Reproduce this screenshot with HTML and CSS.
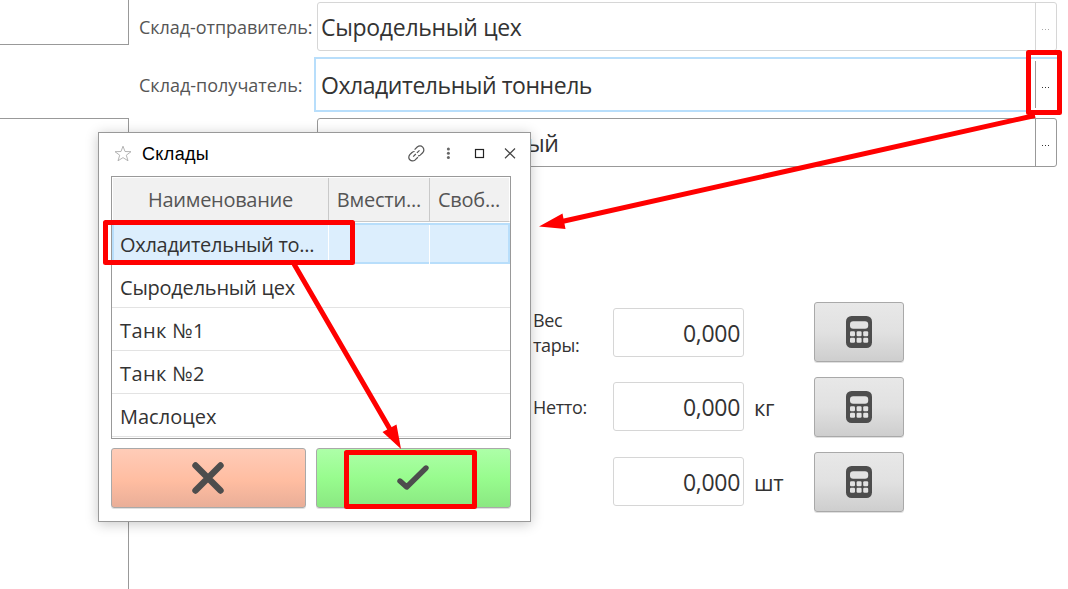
FILE: index.html
```html
<!DOCTYPE html>
<html lang="ru">
<head>
<meta charset="utf-8">
<title>Склады</title>
<link rel="stylesheet" href="styles.css">
</head>
<body>
<svg class="defs" width="0" height="0">
  <symbol id="calc" viewBox="0 0 26 32">
    <rect width="26" height="32" rx="5.5" fill="#4d4d4d"/>
    <g fill="#e2e2e2">
      <rect x="4" y="5.2" width="18.2" height="7.6" rx="3.2"/>
      <rect x="4" y="15.2" width="5" height="5" rx="1.2"/>
      <rect x="10.6" y="15.2" width="5" height="5" rx="1.2"/>
      <rect x="17.2" y="15.2" width="5" height="5" rx="1.2"/>
      <rect x="4" y="21.8" width="5" height="5" rx="1.2"/>
      <rect x="10.6" y="21.8" width="5" height="5" rx="1.2"/>
      <rect x="17.2" y="21.8" width="5" height="5" rx="1.2"/>
    </g>
  </symbol>
</svg>
<div class="page">
  <aside class="side">
    <div class="side-box side-top"></div>
    <div class="side-box side-bottom"></div>
  </aside>
  <main class="main">
    <section class="form">
      <div class="form-row">
        <label class="label label-sender">Склад-отправитель:</label>
        <div class="field field-muted"><span class="value value-sender">Сыродельный цех</span><span class="more"><i></i><i></i><i></i></span></div>
      </div>
      <div class="form-row form-row-active">
        <label class="label label-receiver">Склад-получатель:</label>
        <div class="field field-active"><span class="value value-receiver">Охладительный тоннель</span><span class="more"><i></i><i></i><i></i></span></div>
      </div>
      <div class="form-row">
        <label class="label"></label>
        <div class="field"><span class="value value-product">ый</span><span class="more"><i></i><i></i><i></i></span></div>
      </div>
    </section>
    <section class="weights">
      <div class="weight-row weight-row-tare">
        <span class="weight-label">Вес<br>тары:</span><span class="number">0,000</span><span class="unit"></span>
        <button class="calc-btn"><svg width="26" height="32"><use href="#calc"/></svg></button>
      </div>
      <div class="weight-row">
        <span class="weight-label">Нетто:</span><span class="number">0,000</span><span class="unit">кг</span>
        <button class="calc-btn"><svg width="26" height="32"><use href="#calc"/></svg></button>
      </div>
      <div class="weight-row">
        <span class="weight-label"></span><span class="number">0,000</span><span class="unit">шт</span>
        <button class="calc-btn"><svg width="26" height="32"><use href="#calc"/></svg></button>
      </div>
    </section>
  </main>
</div>

<div class="dialog">
  <header class="titlebar">
    <svg class="star" width="18" height="17" viewBox="0 0 18 17"><path d="M9 1.2 11 6.5 17 6.7 12.3 10.2 14 15.8 9 12.6 4 15.8 5.7 10.2 1 6.7 7 6.5Z" fill="none" stroke="#b4b4b4"/></svg>
    <h1 class="title">Склады</h1>
    <svg class="win-icons" width="110" height="18" viewBox="0 0 110 18" fill="none" stroke="#555" stroke-width="1.2">
      <path d="M6.6 4.6 9.2 2Q12.2-.2 14.7 2.1 16.9 4.8 14.9 7.5L12.2 10.1Q11.2 10.9 10 10.9M6.6 6.5Q5.3 6.4 4 7.5L1.8 9.7Q-.2 12.5 1.8 14.8 4.3 16.9 7.2 14.9L9.9 12.3"/>
      <path d="M5.2 11.6 7.8 9M8.9 7.9 11.5 5.3"/>
      <g fill="#666" stroke="none"><circle cx="40.4" cy="4" r="1.5"/><circle cx="40.4" cy="8.3" r="1.5"/><circle cx="40.4" cy="12.6" r="1.5"/></g>
      <rect x="67.5" y="4.5" width="8" height="8" stroke="#222"/>
      <path d="M97 3.5 107 13.3M107 3.5 97 13.3" stroke="#444"/>
    </svg>
  </header>
  <div class="table">
    <div class="tr thead"><span class="th th-name">Наименование</span><span class="th">Вмести...</span><span class="th th-free">Своб...</span></div>
    <div class="tr selected"><span class="td">Охладительный то...</span><span class="td"></span><span class="td"></span></div>
    <div class="tr"><span class="td">Сыродельный цех</span></div>
    <div class="tr"><span class="td td-tank">Танк №1</span></div>
    <div class="tr"><span class="td td-tank">Танк №2</span></div>
    <div class="tr"><span class="td td-oil">Маслоцех</span></div>
  </div>
  <footer class="actions">
    <button class="btn cancel"><svg width="34" height="34" viewBox="0 0 34 34"><path d="M4.5 4.5 29.5 29.5M29.5 4.5 4.5 29.5" stroke="#4d4d4d" stroke-width="6.4" stroke-linecap="round"/></svg></button>
    <button class="btn ok"><svg width="34" height="34" viewBox="0 0 34 34"><path d="M4 20 10.7 26 30 7" fill="none" stroke="#4d4d4d" stroke-width="5.4" stroke-linecap="round" stroke-linejoin="round"/></svg></button>
  </footer>
</div>

<svg class="marks" width="1068" height="589" viewBox="0 0 1068 589" fill="none" stroke="#f00" stroke-width="5" stroke-linejoin="round">
  <rect x="1028.5" y="52.5" width="31" height="60"/>
  <rect x="105.5" y="222.5" width="247" height="40"/>
  <rect x="346.5" y="452.5" width="128" height="54"/>
  <path d="M1035 115.5 562 221.5M294 264 391 431"/>
  <path d="M539 226.5 562.5 213.5 565.5 229ZM401 449 382.5 432 396.5 424.5Z" fill="#f00" stroke="none"/>
</svg>
</body>
</html>
```
FILE: styles.css
```css
* { box-sizing: border-box; }
body { margin: 0; width: 1068px; height: 589px; overflow: hidden; background: #fff; color: #333; font-family: "Open Sans", "Noto Sans", sans-serif; }
.defs { position: absolute; }
.page { display: flex; height: 589px; }
.side { width: 129px; display: flex; flex-direction: column; gap: 73px; }
.side-box { border-right: 1px solid #999; }
.side-top { height: 45px; border-bottom: 1px solid #999; }
.side-bottom { flex: 1; border-top: 1px solid #999; }
.main { flex: 1; padding: 2px 0 0 10px; }
.form { display: flex; flex-direction: column; gap: 6px; width: 918px; }
.form-row { display: flex; height: 49px; align-items: center; }
.form-row-active { height: 55px; width: 922px; }
.label { width: 178px; flex: none; font-size: 18px; letter-spacing: -.06px; color: #555; white-space: nowrap; }
.form-row-active .label { width: 175px; letter-spacing: 0; }
.field { flex: 1; height: 49px; display: flex; align-items: stretch; border: 1px solid #999; border-radius: 3px; background: #fff; }
.field-muted { border-color: #d6d6d6; }
.field-active { flex: none; width: 746px; height: 55px; border: 2px solid #b8defb; border-radius: 0; padding: 2px 2px 2px 1px; }
.value { flex: 1; padding-left: 3px; font-size: 23px; line-height: 49px; letter-spacing: -.3px; white-space: nowrap; color: #333; }
.value-receiver { padding-left: 4px; letter-spacing: -.45px; }
.value-product { padding-left: 209px; }
.more { width: 21px; flex: none; border-left: 1px solid #999; display: flex; gap: 2px; justify-content: center; align-items: center; padding-top: 5px; padding-right: 1px; }
.field-muted .more { border-color: #d6d6d6; }
.more i { width: 1px; height: 1px; background: #333; }
.field-muted .more i { background: #aaa; }
.weights { margin: 135px 0 0 394px; display: flex; flex-direction: column; gap: 15px; }
.weight-row { display: flex; align-items: center; height: 60px; }
.weight-label { width: 80px; font-size: 18px; line-height: 25px; letter-spacing: -.35px; }
.weight-row-tare .weight-label { padding-top: 2px; }
.number { width: 131px; height: 49px; margin-bottom: 1px; border: 1px solid #d6d6d6; border-radius: 3px; text-align: right; padding-right: 3px; font-size: 23px; line-height: 49px; letter-spacing: -.3px; }
.weight-row-tare .number { margin: 1px 0 0; }
.unit { width: 70px; padding-left: 10px; font-size: 22px; letter-spacing: -.3px; }
.calc-btn, .btn { display: flex; align-items: center; justify-content: center; padding: 0; border: 1px solid #a9a9a9; border-radius: 3px; box-shadow: 0 1px 0 rgba(0,0,0,.12); }
.calc-btn { width: 90px; height: 60px; background: linear-gradient(#e8e8e8, #e1e1e1 50%, #cecece); }
.dialog { position: absolute; left: 98px; top: 132px; width: 433px; height: 390px; border: 1px solid #999; background: #fff; box-shadow: 0 2px 12px rgba(0,0,0,.22); padding: 0 19px 12px 12px; }
.titlebar { height: 43px; display: flex; align-items: center; padding: 0 0 2px 3px; }
.star { flex: none; }
.title { flex: 1; margin: 0 0 0 10px; font: 400 18px/20px "Liberation Sans", sans-serif; letter-spacing: .35px; color: #000; }
.win-icons { flex: none; margin-right: -7px; }
.table { width: 400px; height: 263px; border: 1px solid #999; }
.tr { display: grid; grid-template-columns: 217px 101px 80px; height: 43px; border-bottom: 1px solid #e3e3e3; font-size: 20px; line-height: 45px; letter-spacing: -.22px; white-space: nowrap; }
.thead { height: 45px; border: 1px solid #fff; border-bottom: 1px solid #c9c9c9; grid-template-columns: 216px 101px 79px; background: #f1f1f1; color: #555; line-height: 43px; }
.th { text-align: center; border-right: 1px solid #c9c9c9; }
.th-name { letter-spacing: -.3px; }
.th:last-child { border: 0; }
.th-free { padding-right: 1px; }
.selected { background: #dceefd; border: 2px solid #b8defb; height: 41px; margin: 1px 0; grid-template-columns: 215px 101px 78px; line-height: 40px; letter-spacing: -.3px; }
.td { padding-left: 8px; }
.td-tank { letter-spacing: .4px; }
.td-oil { letter-spacing: 0; }
.selected .td { padding-left: 6px; border-right: 1px solid #fff; }
.selected .td:last-child { border: 0; }
.actions { margin-top: 9px; display: flex; gap: 10px; }
.btn { width: 195px; height: 60px; padding-right: 1px; }
.cancel { background: linear-gradient(#ffccb8, #ffbda1 55%, #e9ae98); }
.ok { background: linear-gradient(#adffa8, #98fc8e 50%, #8ae882); }
.marks { position: absolute; left: 0; top: 0; }
```
